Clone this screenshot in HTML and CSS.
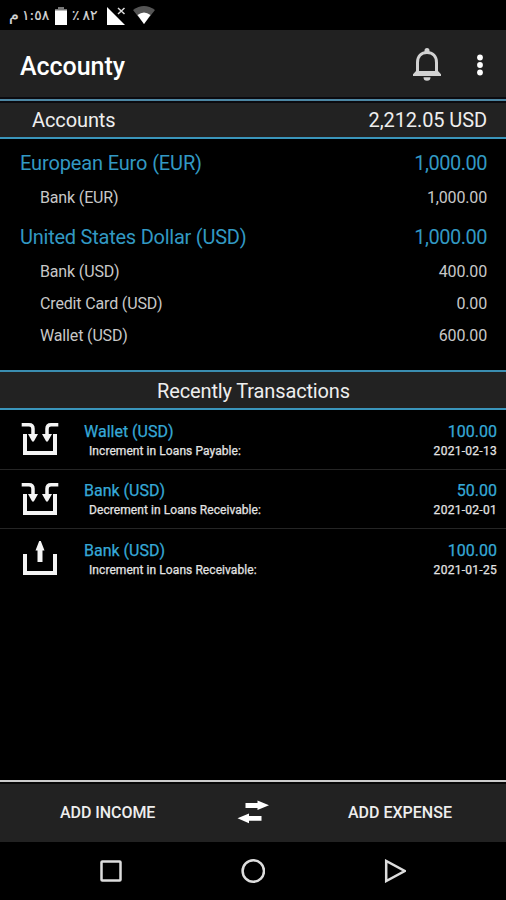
FILE: index.html
```html
<!DOCTYPE html>
<html lang="en">
<head>
<meta charset="utf-8">
<title>Accounty</title>
<link rel="stylesheet" href="styles.css">
</head>
<body>
<div class="screen">
  <div class="status">
    <span class="clock"><span class="period">م</span><span class="digits">١:٥٨</span></span>
    <svg class="battery" width="12" height="18" viewBox="0 0 12 18"><path fill="#777" d="M3 0h6v2h3v2H0V2h3z"/><path fill="#fff" d="M0 3.500h12V18H0z"/></svg>
    <span class="charge"><span>٪</span><span>٨٢</span></span>
    <svg class="signal" width="19" height="18" viewBox="0 0 19 18"><path fill="#fff" d="M0 0l18 18H0z"/><path stroke="#ddd" stroke-width="1.500" d="M11 1l6.500 6M17.500 1L11 7"/></svg>
    <svg class="wifi" width="22" height="18" viewBox="0 0 22 18"><path fill="#555" d="M0 4Q11-4 22 4L11 18z"/><path fill="#fff" d="M4.500 9Q11 4 17.500 9L11 18z"/></svg>
  </div>
  <header class="appbar">
    <h1>Accounty</h1>
    <svg class="bell" width="30" height="34" viewBox="0 0 30 34"><path fill="none" stroke="#d2d2d2" stroke-width="3" d="M5.500 26V14.500C5.500 8 9.500 4.500 15 4.500S24.500 8 24.500 14.500V26"/><path fill="#d2d2d2" d="M12.500 4V2.500a2.500 2.500 0 0 1 5 0V4zM4 23h22l3 3.300V28H1v-1.700zM11.500 29.300h7a3.500 3.500 0 0 1-7 0z"/></svg>
    <svg class="more" width="6" height="22" viewBox="0 0 6 22"><g fill="#fff"><circle cx="3" cy="3.500" r="2.900"/><circle cx="3" cy="11" r="2.900"/><circle cx="3" cy="18.500" r="2.900"/></g></svg>
  </header>
  <div class="band total"><span class="band-label">Accounts</span><span class="band-sum">2,212.05 USD</span></div>
  <main class="accounts">
    <section class="group">
      <h2><span class="eur">European Euro (EUR)</span><span class="sum">1,000.00</span></h2>
      <div class="account"><span>Bank (EUR)</span><span>1,000.00</span></div>
    </section>
    <section class="group">
      <h2><span class="usd">United States Dollar (USD)</span><span class="sum">1,000.00</span></h2>
      <div class="account"><span>Bank (USD)</span><span>400.00</span></div>
      <div class="account"><span>Credit Card (USD)</span><span>0.00</span></div>
      <div class="account"><span>Wallet (USD)</span><span>600.00</span></div>
    </section>
  </main>
  <div class="band recent"><span>Recently Transactions</span></div>
  <div class="transactions">
    <div class="tx">
      <svg class="tray" width="38" height="36" viewBox="0 0 38 36"><g fill="none" stroke="#f4f4f4" stroke-width="4"><path d="M4 13v19h30V13"/><path stroke-width="3.500" d="M.7 3.700H8q4 0 4 4V15M37.300 3.700H30q-4 0-4 4V15"/></g><path fill="#f4f4f4" d="M7 13h10l-4.200 7.500h-1.600zM21 13h10l-4.200 7.500h-1.600z"/></svg>
      <div class="detail"><div class="name"><span>Wallet (USD)</span><span>100.00</span></div><div class="note"><span>Increment in Loans Payable:</span><span class="date">2021-02-13</span></div></div>
    </div>
    <div class="tx">
      <svg class="tray" width="38" height="36" viewBox="0 0 38 36"><g fill="none" stroke="#f4f4f4" stroke-width="4"><path d="M4 13v19h30V13"/><path stroke-width="3.500" d="M.7 3.700H8q4 0 4 4V15M37.300 3.700H30q-4 0-4 4V15"/></g><path fill="#f4f4f4" d="M7 13h10l-4.200 7.500h-1.600zM21 13h10l-4.200 7.500h-1.600z"/></svg>
      <div class="detail"><div class="name"><span>Bank (USD)</span><span>50.00</span></div><div class="note"><span>Decrement in Loans Receivable:</span><span class="date">2021-02-01</span></div></div>
    </div>
    <div class="tx">
      <svg class="tray" width="38" height="36" viewBox="0 0 38 36"><path fill="none" stroke="#f4f4f4" stroke-width="4" d="M4 13v19h30V13"/><path fill="#f4f4f4" d="M18.200 0h1.600L23.500 9.500h-2V21h-5V9.500h-2z"/></svg>
      <div class="detail"><div class="name"><span>Bank (USD)</span><span>100.00</span></div><div class="note"><span>Increment in Loans Receivable:</span><span class="date">2021-01-25</span></div></div>
    </div>
  </div>
  <footer class="actions">
    <span class="income">ADD INCOME</span>
    <svg class="swap" width="32" height="24" viewBox="0 0 32 24"><path fill="#fff" d="M8.500 3h12V.5L32 5.300 20.500 10V8h-12zM24.500 16H12v-2.500L.5 18.300 12 23.200v-2.400h12.500z"/></svg>
    <span class="expense">ADD EXPENSE</span>
  </footer>
  <nav class="system">
    <svg width="22" height="22" viewBox="0 0 22 22"><rect x="1.500" y="1.500" width="19" height="19" rx=".8"/></svg>
    <svg width="24" height="24" viewBox="0 0 24 24"><circle cx="12.300" cy="12" r="10.700"/></svg>
    <svg width="22" height="24" viewBox="0 0 22 24"><path d="M2.200 2v20l18.500-10z"/></svg>
  </nav>
</div>
</body>
</html>
```
FILE: styles.css
```css
* { box-sizing: border-box; }
body { margin: 0; background: #000; color: #e8e8e8; font-family: Roboto, "Liberation Sans", sans-serif; }
h1, h2 { margin: 0; font-weight: 400; }
svg { display: block; flex: none; }
span { white-space: nowrap; }
.screen { width: 506px; height: 900px; display: flex; flex-direction: column; overflow: hidden; }
.status { height: 30px; padding: 6px 0 0 9px; display: flex; align-items: flex-start; font-family: "DejaVu Sans", sans-serif; font-size: 14px; line-height: 18px; color: #d8d8d8; -webkit-text-stroke: .2px; }
.clock, .charge { display: flex; direction: ltr; }
.clock { width: 46px; gap: 3px; }
.period { font-size: 16px; }
.digits { letter-spacing: -.5px; }
.charge { width: 34px; margin-left: 5px; gap: 3px; }
.battery { margin-top: 1px; }
.signal { margin-left: 1px; margin-top: 1px; }
.wifi { margin-left: 7px; }
.appbar { height: 69px; background: #212121; border-bottom: 2px solid #0b0b10; display: flex; align-items: center; padding: 2px 23px 0 20px; }
.appbar h1 { flex: 1; font-size: 25px; line-height: 32px; font-weight: 500; color: #fff; padding-top: 4px; letter-spacing: -.05px; }
.bell { margin-right: 35px; }
.band { background: #222; border-top: 2px solid #3a8db0; border-bottom: 2px solid #3a95bb; display: flex; align-items: center; font-size: 20px; color: #eee; }
.total { height: 40px; padding: 2px 19px 0 32px; justify-content: space-between; letter-spacing: -.1px; border-top-color: #4d87a3; box-shadow: inset 0 2px #0b0b10; }
.accounts { height: 231px; padding-top: 6px; display: flex; flex-direction: column; gap: 6px; }
.group h2 { height: 36px; padding: 0 19px 0 20px; display: flex; justify-content: space-between; align-items: center; font-size: 20px; color: #3299c3; }
.eur { letter-spacing: -.14px; }
.usd { letter-spacing: -.24px; }
.sum { letter-spacing: -.5px; }
.account { height: 32px; padding: 0 19px 0 40px; display: flex; justify-content: space-between; align-items: center; font-size: 16px; color: #c8c8c8; letter-spacing: -.15px; }
.recent { height: 40px; justify-content: center; padding: 2px 0 0 1px; letter-spacing: -.14px; }
.tx { height: 59.500px; border-bottom: 1px solid #252525; padding: 0 9px 0 21px; display: flex; align-items: center; }
.tx:last-child { border: 0; }
.detail { flex: 1; margin-left: 25px; padding-top: 3px; }
.name, .note { display: flex; justify-content: space-between; }
.name { font-size: 16px; line-height: 20px; color: #36a9d8; -webkit-text-stroke: .25px; }
.note { font-size: 12px; line-height: 18px; padding-left: 5px; color: #e4e4e4; -webkit-text-stroke: .25px; letter-spacing: .07px; }
.date { letter-spacing: .28px; }
.transactions { height: 370px; }
.actions { height: 62px; border-top: 2px solid #ccc; background: #222; box-shadow: inset 0 2px #080808; display: flex; align-items: center; padding: 0 54px 0 60px; font-size: 16px; font-weight: 500; color: #eee; }
.income { width: 177px; letter-spacing: -.05px; }
.expense { margin-left: 79px; }
.system { height: 58px; display: flex; justify-content: space-between; align-items: center; padding: 0 100px; fill: none; stroke: #ddd; stroke-width: 2.500; }
```
